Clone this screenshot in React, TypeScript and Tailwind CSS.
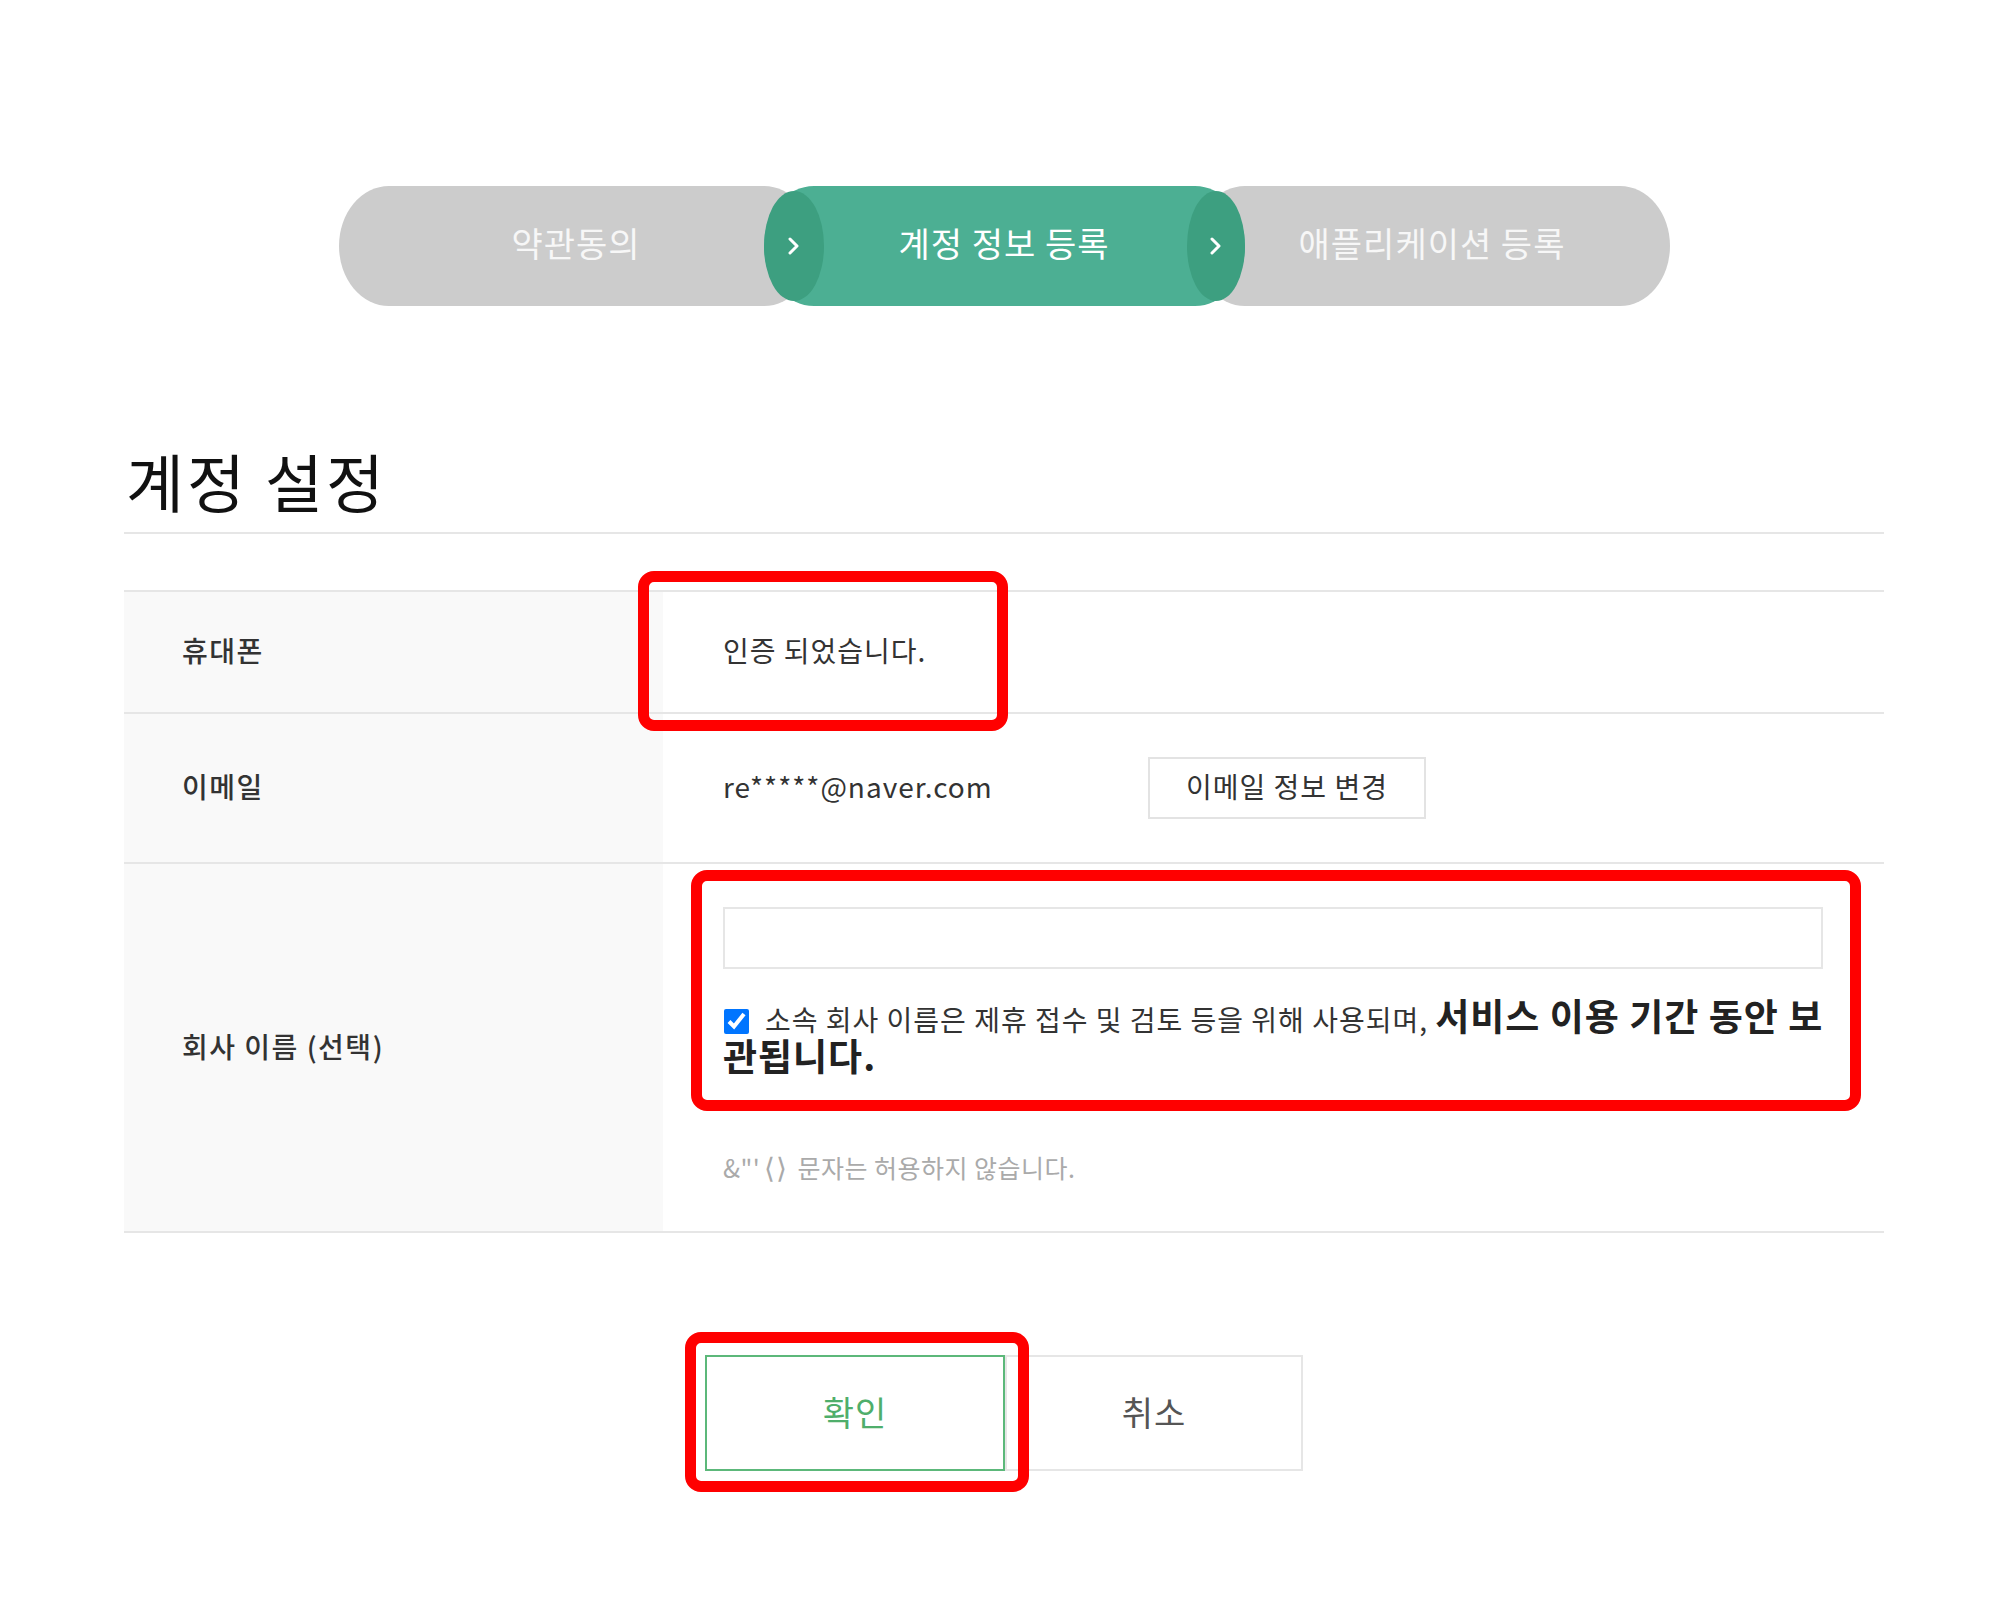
import React from "react"

const font = { fontFamily: '"Noto Sans CJK KR", "Noto Sans", sans-serif' }

const Chevron = () => (
    <svg width="12" height="20" viewBox="0 0 12 20" fill="none">
        <polyline points="2,3 9,10 2,17" stroke="#ffffff" strokeWidth="3" strokeLinecap="round" strokeLinejoin="round" />
    </svg>
)

const Stepper = () => {
    return (
        <div className="flex justify-center pt-[186px] text-[34px] tracking-[1px] leading-none">
            {/* step 1 */}
            <div className="w-[475px] h-[120px] pb-[6px] rounded-[50px/60px] bg-[#cccccc] flex items-center justify-center text-[#f7f7f7]">
                약관동의
            </div>
            {/* step 2 (active) */}
            <div className="relative z-10 -ml-[50px] w-[481px] h-[120px] pb-[6px] rounded-[50px/60px] bg-[#4caf93] flex items-center justify-center text-white">
                <div className="absolute left-0 top-[5px] w-[60px] h-[110px] rounded-[50%] bg-[#3d9f80] flex items-center justify-center">
                    <Chevron />
                </div>
                <span>계정 정보 등록</span>
                <div className="absolute right-0 top-[5px] w-[58px] h-[110px] rounded-[50%] bg-[#3d9f80] flex items-center justify-center">
                    <Chevron />
                </div>
            </div>
            {/* step 3 */}
            <div className="-ml-[50px] w-[475px] h-[120px] pb-[6px] rounded-[50px/60px] bg-[#cccccc] flex items-center justify-center text-[#f7f7f7]">
                애플리케이션 등록
            </div>
        </div>
    )
}

const RedMark = ({ className }: { className: string }) => (
    <div className={"absolute border-[11px] border-[#ff0000] rounded-[16px] pointer-events-none " + className} />
)

const labelCls = "w-[539px] shrink-0 bg-[#f9f9f9] pl-[58px] pb-[4px] flex items-center font-medium tracking-[1.5px]"

export default function App() {
    return (
        <div className="min-h-[1604px] bg-white text-[#333]" style={font}>
            <div className="ml-[124px] w-[1760px]">
                <Stepper />

                {/* Title */}
                <div className="mt-[138px] pb-[16px] border-b-2 border-[#e6e6e6]">
                    <h2 className="text-[63px] leading-[72px] text-[#111] pl-[2px] tracking-[3px]">계정 설정</h2>
                </div>

                {/* Form table */}
                <div className="mt-[56px] border-t-2 border-[#e6e6e6] text-[28px] tracking-[1px]">
                    {/* phone */}
                    <div className="flex h-[122px] border-b-2 border-[#e6e6e6]">
                        <div className={labelCls}>휴대폰</div>
                        <div className="relative flex-1 min-w-0 pl-[60px] pb-[4px] flex items-center">
                            인증 되었습니다.
                            <RedMark className="-left-[25px] -top-[21px] w-[370px] h-[160px]" />
                        </div>
                    </div>

                    {/* email */}
                    <div className="flex h-[150px] border-b-2 border-[#e6e6e6]">
                        <div className={labelCls}>이메일</div>
                        <div className="flex-1 min-w-0 pl-[60px] flex items-center">
                            <span className="w-[425px] pb-[4px]">re*****@naver.com</span>
                            <button className="w-[278px] h-[62px] pb-[4px] border-2 border-[#e3e3e3] bg-white text-[28px] tracking-[1px] text-[#333]">
                                이메일 정보 변경
                            </button>
                        </div>
                    </div>

                    {/* company */}
                    <div className="flex h-[369px] border-b-2 border-[#e6e6e6]">
                        <div className={labelCls}>회사 이름 (선택)</div>
                        <div className="relative flex-1 min-w-0 pl-[60px] pr-[61px] pt-[43px]">
                            <input className="block w-full h-[62px] border-2 border-[#e6e6e6] outline-none px-4 text-[28px]" />
                            <p className="mt-[28px] leading-[36px] text-[#333]">
                                <span className="whitespace-nowrap">
                                    <input type="checkbox" defaultChecked className="w-[25px] h-[25px] mr-[16px] ml-[1px] align-[-3px] accent-[#0075ff]" />
                                    소속 회사 이름은 제휴 접수 및 검토 등을 위해 사용되며,{" "}
                                    <b className="text-[37px] leading-[36px] font-bold text-[#222] tracking-[1px]">서비스 이용 기간 동안 보</b>
                                </span>
                                <br />
                                <b className="text-[37px] leading-[36px] font-bold text-[#222] tracking-[1px]">관됩니다.</b>
                            </p>
                            <p className="mt-[71px] text-[25px] leading-[36px] tracking-[0.5px] text-[#aaaaaa]">
                                &amp;"'<span className="mx-[4px] text-[28px]">⟨⟩</span> 문자는 허용하지 않습니다.
                            </p>
                            <RedMark className="left-[28px] top-[6px] w-[1170px] h-[241px]" />
                        </div>
                    </div>
                </div>

                {/* Buttons */}
                <div className="mt-[122px] flex justify-center text-[34px] tracking-[1px]">
                    <div className="relative">
                        <button className="w-[300px] h-[116px] pb-[4px] border-2 border-[#5cb87a] bg-white text-[#4fae6b]">확인</button>
                        <RedMark className="-left-[20px] -top-[23px] w-[344px] h-[160px]" />
                    </div>
                    <button className="w-[298px] h-[116px] pb-[4px] border-2 border-[#e6e6e6] bg-white text-[#555]">취소</button>
                </div>
            </div>
        </div>
    )
}
